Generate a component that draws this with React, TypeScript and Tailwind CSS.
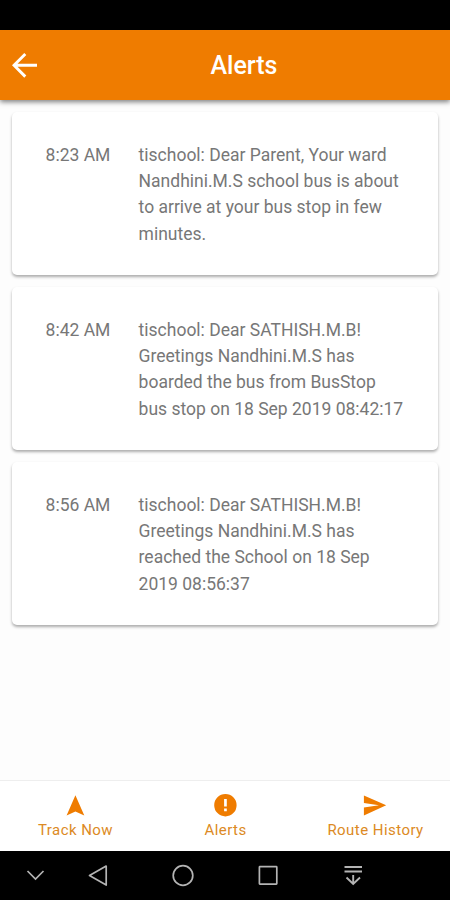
interface AlertItem {
  time: string;
  lines: string[];
}

const alerts: AlertItem[] = [
  {
    time: "8:23 AM",
    lines: [
      "tischool: Dear Parent, Your ward",
      "Nandhini.M.S school bus is about",
      "to arrive at your bus stop in few",
      "minutes.",
    ],
  },
  {
    time: "8:42 AM",
    lines: [
      "tischool: Dear SATHISH.M.B!",
      "Greetings Nandhini.M.S has",
      "boarded the bus from BusStop",
      "bus stop on 18 Sep 2019 08:42:17",
    ],
  },
  {
    time: "8:56 AM",
    lines: [
      "tischool: Dear SATHISH.M.B!",
      "Greetings Nandhini.M.S has",
      "reached the School on 18 Sep",
      "2019 08:56:37",
    ],
  },
];

const tabs = [
  {
    label: "Track Now",
    icon: <path d="M15.4 5.2 24.3 25.6 15.4 21.6 6.6 25.6Z" />,
  },
  {
    label: "Alerts",
    icon: (
      <path
        fillRule="evenodd"
        d="M15.4 4a11.2 11.2 0 1 0 0 22.4A11.2 11.2 0 0 0 15.4 4ZM14.1 9h2.7v7.4h-2.7ZM14.1 18.6h2.7v2.7h-2.7Z"
      />
    ),
  },
  {
    label: "Route History",
    icon: <path d="M3.9 5.4 26.2 15.3 3.9 25.4V17.5L19 15.3 3.9 13.1Z" />,
  },
];

const Header = () => {
  return (
    <header className="relative z-10 flex h-[70px] items-center justify-center bg-[#ef7c00] shadow-[0_2px_5px_rgba(0,0,0,0.5)]">
      <button className="absolute left-3 top-[22px]" aria-label="Back">
        <svg
          width="26"
          height="26"
          viewBox="0 0 26 26"
          fill="none"
          stroke="white"
          strokeWidth="2.9"
        >
          <path d="M25 13.3H2M13.3 2 2 13.3 13.3 24.6" />
        </svg>
      </button>
      <h1 className="pl-[38px] pt-0.5 text-[25px] font-medium leading-7 text-white">
        Alerts
      </h1>
    </header>
  );
};

const AlertCard = ({ time, lines }: AlertItem) => {
  return (
    <article className="flex h-[163px] rounded-[5px] bg-white pl-[33.6px] pt-[29.75px] text-[17.5px] leading-[26.25px] text-[#777] shadow-[0_2px_3px_rgba(0,0,0,0.32)]">
      <time className="w-[93px] shrink-0">{time}</time>
      <p>
        {lines.map((line) => (
          <span key={line} className="block whitespace-nowrap">
            {line}
          </span>
        ))}
      </p>
    </article>
  );
};

const TabBar = () => {
  return (
    <nav className="flex h-[71px] border-t border-[#eee] bg-white text-[#ef7c00]">
      {tabs.map((tab) => (
        <button
          key={tab.label}
          className="flex flex-1 flex-col items-center pt-[9px]"
        >
          <svg width="30" height="30" viewBox="0 0 30 30" fill="currentColor">
            {tab.icon}
          </svg>
          <span className="whitespace-nowrap pl-px text-[15px] leading-5 tracking-[0.45px] text-[#dc8a24]">
            {tab.label}
          </span>
        </button>
      ))}
    </nav>
  );
};

const SystemBar = () => {
  return (
    <footer className="h-[49px] bg-black">
      <svg
        width="450"
        height="49"
        viewBox="0 0 450 49"
        fill="none"
        stroke="#b4b4b4"
        strokeWidth="1.7"
      >
        <path d="M27.5 20 35.5 28 43.5 20" />
        <path d="M106.2 15.1V34.1L89.5 24.6Z" strokeLinejoin="round" />
        <circle cx="183" cy="24.5" r="9.8" />
        <rect x="259.4" y="15.7" width="17.4" height="17.4" rx="0.5" />
        <path
          d="M344.5 16H362M344.5 20.5H362M353.2 24V33M346.5 26.5 353.2 33 360 26.5"
          strokeWidth="1.9"
        />
      </svg>
    </footer>
  );
};

const App = () => {
  return (
    <div className="flex h-[900px] w-[450px] flex-col overflow-hidden bg-[#fdfdfd] font-[Roboto,sans-serif]">
      <div className="h-[30px] shrink-0 bg-black" />
      <Header />
      <main className="flex flex-1 flex-col gap-3 px-3 pt-3">
        {alerts.map((alert) => (
          <AlertCard key={alert.time} {...alert} />
        ))}
      </main>
      <TabBar />
      <SystemBar />
    </div>
  );
};

export default App;
